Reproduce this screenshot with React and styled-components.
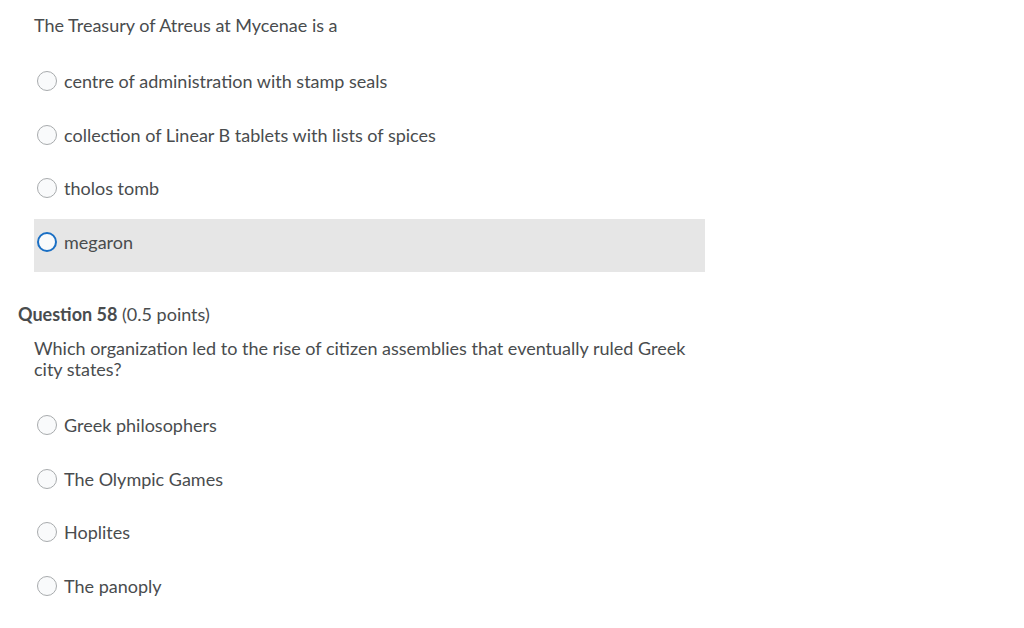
import React from 'react'
import styled, { createGlobalStyle } from 'styled-components'

const GlobalStyle = createGlobalStyle`
    body {
        margin: 0;
        background: #ffffff;
        font-family: Lato, "Open Sans", sans-serif;
        color: #494c4e;
    }
`;

const Page = styled.div`
    width: 1024px;
    height: 628px;
    padding: 15px 0 0 18px;
    box-sizing: border-box;
    overflow: hidden;
`;

const Block = styled.div`
    width: 671px;
    margin-left: 16px;
`;

const Stem = styled.div`
    font-size: 18px;
    line-height: 21px;
    margin-bottom: ${props => props.gap}px;
`;

const Heading = styled.div`
    font-size: 18px;
    line-height: 20px;
    margin: 32px 0 14px 0;
    b {
        font-weight: 700;
    }
`;

const Option = styled.label`
    display: flex;
    align-items: flex-start;
    gap: 7px;
    height: 53.5px;
    padding: 13px 0 0 3px;
    box-sizing: border-box;
    background: ${props => props.active ? '#e6e6e6' : 'transparent'};
    font-size: 18px;
    line-height: 20px;
`;

const Radio = styled.span`
    width: 20px;
    height: 20px;
    margin-top: 0;
    border-radius: 50%;
    box-sizing: border-box;
    border: ${props => props.active ? '2px solid #1a6fc4' : '1px solid #a8abad'};
    background: #f9fafb;
    flex-shrink: 0;
`;

const first = [
    'centre of administration with stamp seals',
    'collection of Linear B tablets with lists of spices',
    'tholos tomb',
    'megaron',
]

const second = [
    'Greek philosophers',
    'The Olympic Games',
    'Hoplites',
    'The panoply',
]

function Choices({ items, active }) {
    return items.map((text, i) => (
        <Option key={text} active={i === active}>
            <Radio active={i === active} />
            <span>{text}</span>
        </Option>
    ))
}

export default function App() {
    return (
        <Page>
            <GlobalStyle />
            <Block>
                <Stem gap={22}>The Treasury of Atreus at Mycenae is a</Stem>
                <Choices items={first} active={3} />
            </Block>
            <Heading><b>Question 58</b> (0.5 points)</Heading>
            <Block>
                <Stem gap={22}>
                    Which organization led to the rise of citizen assemblies that eventually ruled Greek city states?
                </Stem>
                <Choices items={second} active={-1} />
            </Block>
        </Page>
    )
}
